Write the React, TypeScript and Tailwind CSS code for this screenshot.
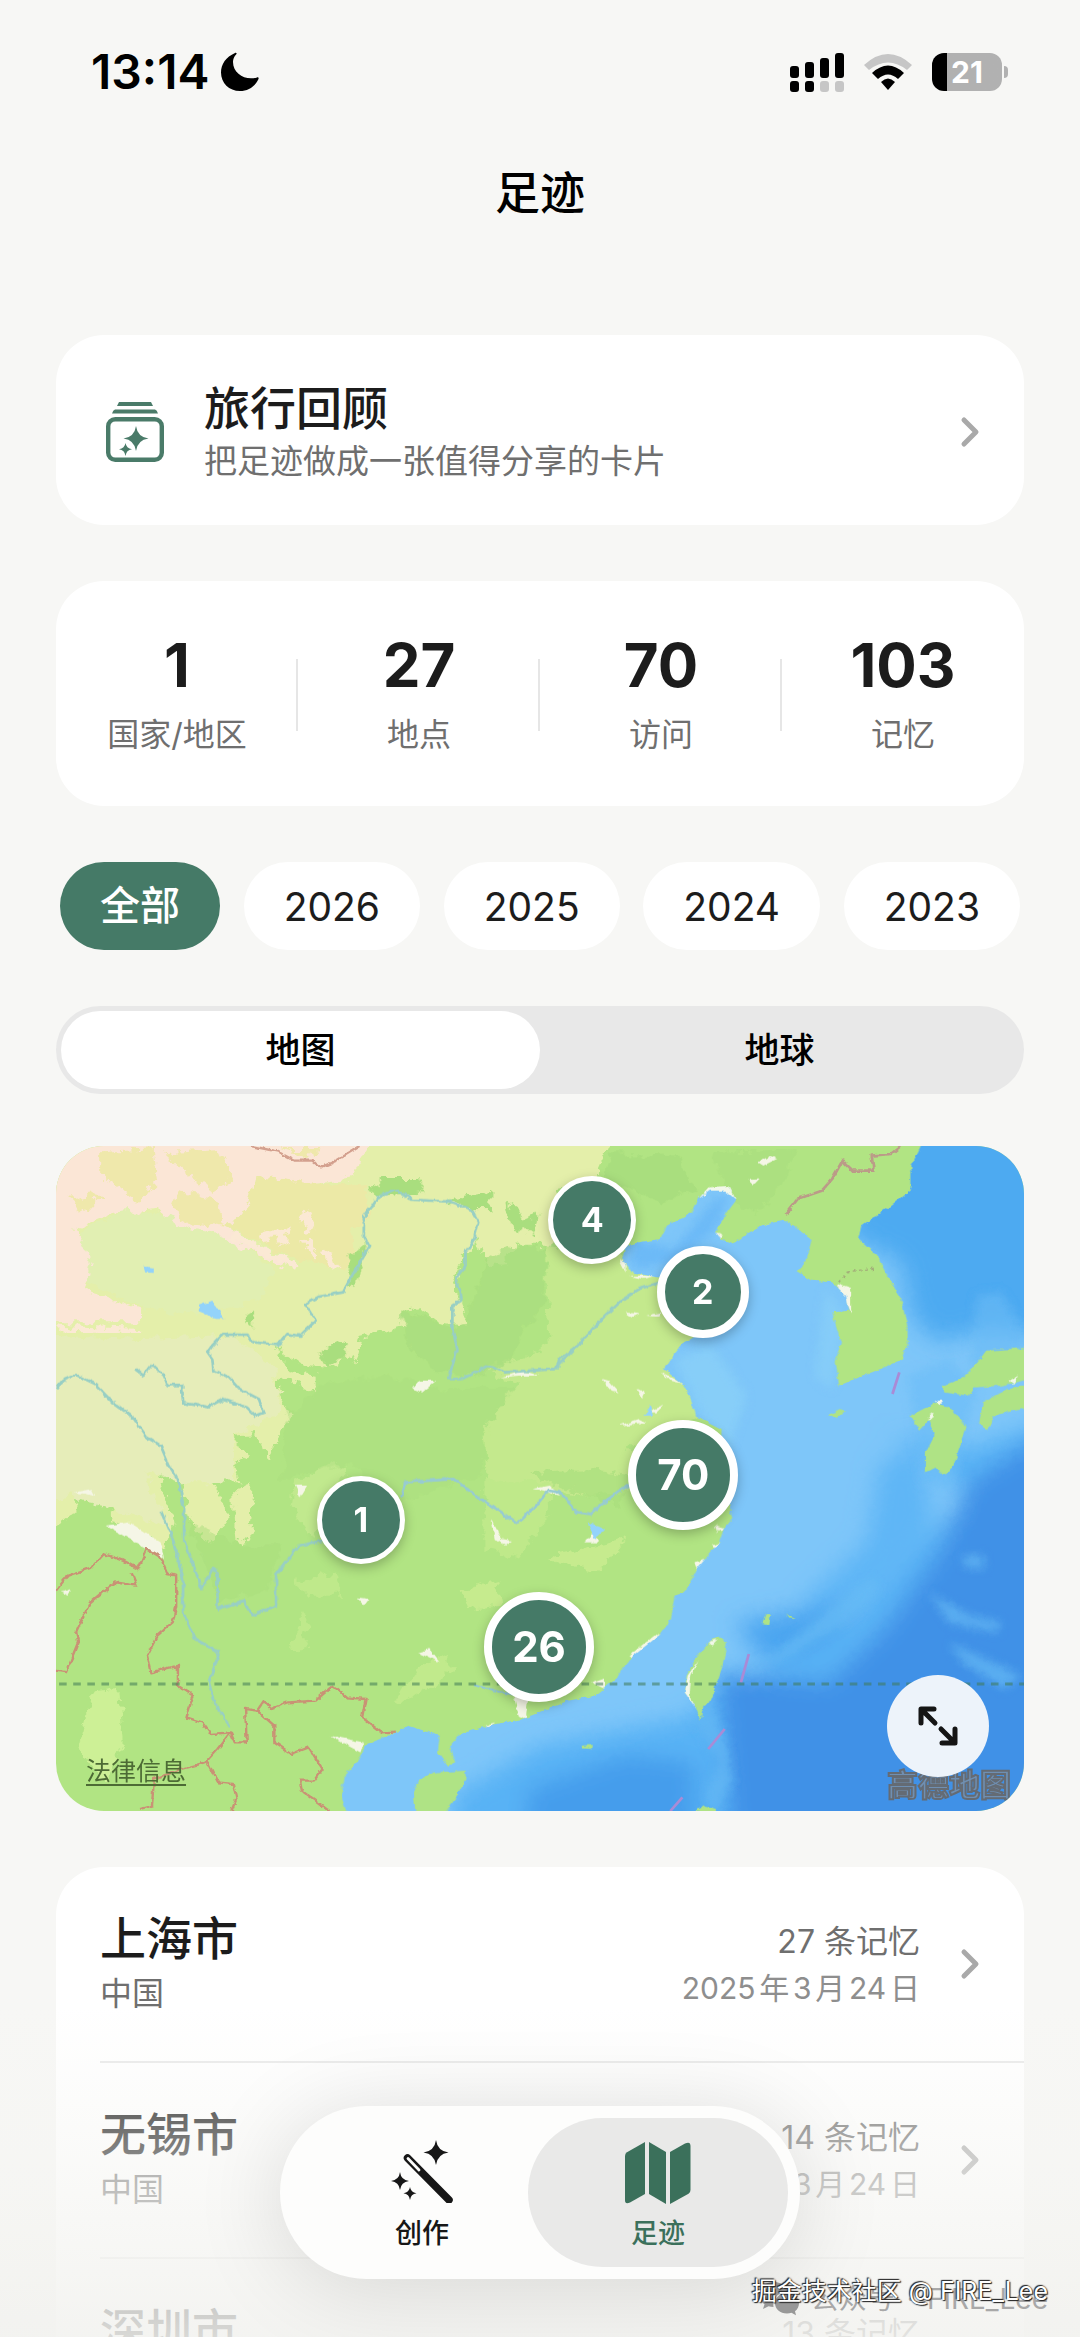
import {useState} from "react";

const years = ["全部", "2026", "2025", "2024", "2023"];

const stats = [
    {value: "1", label: "国家/地区"},
    {value: "27", label: "地点"},
    {value: "70", label: "访问"},
    {value: "103", label: "记忆"},
];

const places = [
    {city: "上海市", country: "中国", count: "27 条记忆", date: "2025年3月24日"},
    {city: "无锡市", country: "中国", count: "14 条记忆", date: "2025年3月24日"},
    {city: "深圳市", country: "中国", count: "13 条记忆", date: "2025年3月24日"},
];

const pins = [
    {count: 4, place: "left-[55.4%] top-[11.1%]", look: "size-22 border-5 text-[34px]"},
    {count: 2, place: "left-[66.8%] top-[22%]", look: "size-23 border-8 text-[34px]"},
    {count: 70, place: "left-[64.8%] top-[49.4%]", look: "size-[110px] border-8 text-[42px]"},
    {count: 1, place: "left-[31.5%] top-[56.2%]", look: "size-22 border-5 text-[34px]"},
    {count: 26, place: "left-[49.9%] top-[75.4%]", look: "size-[110px] border-8 text-[42px]"},
];

function ChevronIcon() {
    return <svg viewBox="0 0 20 32" className="h-8 w-5 shrink-0 text-[#a9a9a9]" fill="none" stroke="currentColor"
        strokeWidth="5" strokeLinecap="round" strokeLinejoin="round">
        <path d="M4 4 16 16 4 28" />
    </svg>
}

function StatusBar() {
    return <header className="flex h-36 items-center justify-between pr-[72px] pl-[91px]">
        <div className="flex items-center gap-3">
            <span className="text-[48px] leading-none font-semibold">13:14</span>
            <svg viewBox="0 0 38 40" className="h-10 w-[38px]">
                <path d="M14 1C5 5 0 12 0 20.500C0 31 8 39 19 39C27 39 34 34.500 37.500 27C38 25.700 37 25 36 25.400C25 29 12 22 12 10C12 7 13 4.500 15.300 2.200C16.200 1.200 15.200 .5 14 1Z" />
            </svg>
        </div>
        <div className="flex items-center gap-5">
            <svg viewBox="0 0 54 40" className="h-10 w-[54px]">
                <rect x="0" y="14" width="9" height="12" rx="3" />
                <rect x="15" y="10" width="9" height="16" rx="3" />
                <rect x="30" y="6" width="9" height="20" rx="3" />
                <rect x="45" y="1" width="9" height="25" rx="3" />
                <rect x="0" y="29" width="9" height="11" rx="3" />
                <rect x="15" y="29" width="9" height="11" rx="3" />
                <rect x="30" y="29" width="9" height="11" rx="3" fill="#c6c6c6" />
                <rect x="45" y="29" width="9" height="11" rx="3" fill="#c6c6c6" />
            </svg>
            <svg viewBox="0 0 48 36" className="h-9 w-12">
                <path d="M0 11Q24-11 48 11L43 16Q24 1 5 16Z" fill="#c6c6c6" />
                <path d="M8 19Q24 4 40 19L34 25Q24 16 14 25Z" />
                <path d="M17 28Q24 21 31 28L24 36Z" />
            </svg>
            <div className="flex items-center gap-0.5">
                <div className="flex h-[38px] w-[70px] items-center justify-center rounded-xl bg-linear-to-r from-black from-21% to-[#b1b1b1] to-21% text-[30px] leading-none font-bold text-white">
                    21
                </div>
                <div className="h-3 w-1 rounded-r-full bg-[#b1b1b1]" />
            </div>
        </div>
    </header>
}

function RecapCard() {
    return <button type="button"
        className="flex items-center rounded-[48px] bg-white pt-12 pr-11 pb-11 pl-[50px] text-left">
        <svg viewBox="0 0 58 60" className="mr-10 h-[60px] w-[58px] text-[#4a7b69]" fill="currentColor">
            <path d="M13 0H45L47 4H11Z" />
            <path d="M9 7.500H49Q51 8 52 11.500H6Q7 8 9 7.500Z" />
            <rect x="2.200" y="17.200" width="53.600" height="40.600" rx="7" fill="none" stroke="currentColor" strokeWidth="4.400" />
            <path d="M30 24Q31.500 35 42.500 36.500Q31.500 38 30 49Q28.500 38 17.500 36.500Q28.500 35 30 24Z" />
            <path d="M19.500 41Q20.300 46.500 26 47.300Q20.300 48 19.500 54Q18.700 48 13 47.300Q18.700 46.500 19.500 41Z" />
        </svg>
        <div className="grow">
            <h2 className="text-[46px] leading-[50px] font-medium text-[#1c1c1c]">旅行回顾</h2>
            <p className="mt-2 text-[33px] leading-10 text-[#6f6f6f]">把足迹做成一张值得分享的卡片</p>
        </div>
        <ChevronIcon />
    </button>
}

function StatsCard() {
    return <dl className="grid grid-cols-4 rounded-[48px] bg-white pt-[50px] pb-[47px] text-center">
        {stats.map((stat) => <div key={stat.label} className="group relative flex flex-col-reverse">
            <dt className="mt-3 text-[32px] leading-12 text-[#6f6f6f]">{stat.label}</dt>
            <dd className="text-[60px] leading-[68px] font-bold text-[#1c1c1c]">{stat.value}</dd>
            <span className="absolute top-1/2 right-0 h-18 w-0.5 -translate-y-1/2 bg-[#e6e6e6] group-last:hidden" />
        </div>)}
    </dl>
}

function Terrain() {
    return <svg viewBox="46 51 2811 1995" preserveAspectRatio="none" className="absolute inset-0 size-full"
        fill="none">
        <defs>
            <filter id="rough" x="0" y="0" width="100%" height="100%">
                <feTurbulence type="fractalNoise" baseFrequency=".05" numOctaves="3" seed="4" result="noise" />
                <feDisplacementMap in="SourceGraphic" in2="noise" scale="14" xChannelSelector="R" yChannelSelector="G" />
            </filter>
            <filter id="veryRough" x="0" y="0" width="100%" height="100%">
                <feTurbulence type="fractalNoise" baseFrequency=".03" numOctaves="4" seed="9" result="noise" />
                <feDisplacementMap in="SourceGraphic" in2="noise" scale="45" xChannelSelector="R" yChannelSelector="G" />
            </filter>
            <filter id="soft" x="-20%" y="-20%" width="140%" height="140%">
                <feGaussianBlur stdDeviation="34" />
            </filter>
            <filter id="softer" x="-20%" y="-20%" width="140%" height="140%">
                <feGaussianBlur stdDeviation="14" />
            </filter>
            <clipPath id="sea">
                <path d="M2567 30L2530 110V180L2470 230L2385 290L2375 330L2430 380L2460 440L2500 510L2518 590L2520 640L2505 690L2440 720L2390 740L2320 770L2310 700L2325 640L2310 590L2300 550L2350 545L2340 500L2300 460L2240 455L2200 430L2230 380L2240 330L2200 300L2160 275L2110 285L2060 310L2010 345L1975 330L1960 310L1995 250L2020 215L2000 175L1940 180L1910 210L1890 250L1820 290L1800 330L1740 340L1700 350L1690 390L1715 430L1790 445L1860 450L2000 480L1900 620L1870 640L1830 690L1812 720L1870 770L1890 810L1905 860L1980 900L1975 1000L2010 1170L1985 1200L1972 1240L1907 1320L1872 1390L1842 1400L1832 1470L1802 1515L1712 1590L1672 1650L1612 1700L1532 1715L1462 1745L1400 1770L1300 1790L1220 1815L1190 1850L1205 1900L1185 1910L1155 1870L1160 1820L1070 1790L1010 1820L945 1850L920 1900L885 1940L875 2000L895 2070H2880V30Z" />
            </clipPath>
        </defs>

        <rect x="0" y="0" width="2900" height="2100" fill="#b1e483" />

        {/* lowlands and grassland */}
        <g filter="url(#veryRough)">
            <path d="M1470 350L1700 380L1810 445L1920 620L1830 700L1930 860L1700 960L1870 1060L1600 1100L1300 1060L1290 900L1390 760L1290 720L1480 650L1470 450Z" fill="#c4e98d" />
            <path d="M1290 1050L1480 1060L1480 1150L1400 1280L1290 1260Z" fill="#bfe98a" />
            <path d="M1480 1280L1700 1230L1620 1330L1500 1300ZM1220 1380L1330 1350L1340 1430L1240 1440Z" fill="#c6eb8e" />
            <path d="M1030 1720L1090 1620L1180 1580L1200 1620L1130 1680Z" fill="#c1ea8c" />
            <path d="M730 1560L760 1440L780 1480L760 1570ZM740 1360L860 1330L880 1400L780 1400Z" fill="#bfe98b" />
            <path d="M150 1690L230 1680L240 1850L190 1960L110 1860Z" fill="#cdf096" />
            <path d="M740 1060L850 1000L900 1010L840 1130L790 1230L730 1130Z" fill="#c1e98e" />
            <path d="M20 20H1665L1620 120V160L1500 190L1490 350H1390L1340 410L1290 400L1270 330L1230 380L1200 450L1240 590L1160 580L1110 540L1050 545L1060 590L990 610L930 625L910 710L880 650L870 710L830 720L760 710L680 650L730 730L800 740V790L700 745L690 790L730 860L690 920L670 990L640 960L630 915L560 920L600 980L560 1010L580 1060L500 1060L550 1160L490 1250L430 1160L410 1060L340 1030L390 1180L360 1260L300 1220L200 1185L220 1130L130 1100L20 1150Z" fill="#e4efaa" />
            <path d="M20 620L300 630L560 620L680 720L700 850L560 920L560 1060H400L300 1020L380 1200L220 1140L20 1100Z" fill="#e6edb9" />
            <path d="M110 310L250 240L400 270L560 330L680 420L640 520L450 560L280 530L140 460Z" fill="#e1efb2" />
            <path d="M560 1080L620 1060L610 1230L570 1240Z" fill="#e4efaa" />
            <path d="M20 1150L90 1090L110 1140L30 1200Z" fill="#e4efaa" />
        </g>

        {/* deserts */}
        <g filter="url(#veryRough)">
            <path d="M20 20H980L900 150L720 170L620 140L600 250L540 290L620 340L720 400L700 410L500 310L400 290L340 240L220 250L100 300L150 400L130 480L290 540L290 580H20Z" fill="#fbe6d6" />
            <path d="M620 140L780 160L950 170L950 260L900 300L920 400L860 420L720 380L540 290L600 250Z" fill="#ece9a6" />
            <path d="M180 70L330 60L340 160L290 220L180 150ZM360 70L520 60L560 150L500 190L420 130ZM400 190L500 210L540 290L430 280L380 240ZM80 210L180 195L130 250ZM700 60L820 60L770 80Z" fill="#efe8ab" />
            <path d="M760 250L790 310M770 330L800 390M830 370L860 420M640 330L710 310L700 340M560 320L740 410M50 600L290 610" stroke="#fbe9d4" strokeWidth="20" />
        </g>

        {/* forest */}
        <g filter="url(#veryRough)" fill="#a9de7e">
            <path d="M955 180L1000 150L1100 150L1120 190L980 200ZM1180 210L1310 185L1310 240L1250 240Z" />
            <path d="M900 390L945 350L920 470L890 470ZM590 560L620 540L620 590ZM640 540L690 580ZM800 680L860 640L900 650L840 720Z" />
            <path d="M1040 540L1110 560L1200 600L1240 580L1290 400L1360 350L1470 360L1460 540L1400 600L1370 700L1250 740L1150 720L1070 660Z" opacity=".75" />
            <path d="M1350 210L1400 270L1450 250L1440 320L1360 280ZM1660 70L1850 80L1900 180L1800 220L1640 150Z" />
            <path d="M720 860L830 760L1000 740L1180 780L1380 780L1290 900L1290 1030L1050 1120L900 1000L700 1050Z" opacity=".35" />
            <path d="M430 1180L600 1250L700 1250L660 1380L520 1420Z" opacity=".5" />
            <path d="M1420 1030L1600 1020L1720 1040L1680 1130L1560 1090Z" opacity=".7" />
            <path d="M1950 70L2200 60L2160 160L2080 260L1990 200Z" opacity=".6" />
        </g>

        {/* bare ground and city footprints */}
        <g filter="url(#rough)" fill="#f5f6e6">
            <path d="M1080 780L1100 755L1150 755L1110 790ZM1340 745L1400 725L1450 740L1390 740ZM100 1090L150 1080L160 1100ZM190 1190L260 1180L350 1240L360 1290L310 1260ZM740 1070L775 1070L755 1105ZM920 1405L955 1410L940 1430ZM1095 1570L1130 1560L1160 1600ZM1310 1170L1340 1230L1370 1235L1350 1250L1320 1230ZM1430 1080L1480 1070L1510 1100ZM1375 1700L1420 1690L1410 1770L1390 1760ZM840 1820L940 1840L930 1870ZM905 1930L935 1890L925 1920Z" />
            <path d="M1632 750L1650 755L1680 790L1660 785ZM1735 780L1755 790L1745 810ZM1760 850L1810 830L1790 850ZM1680 890L1740 870L1760 880ZM1700 550L1740 555L1720 565ZM1760 560L1800 550L1800 565ZM1805 730L1870 765L1830 755ZM1680 390L1700 400L1700 430ZM1710 440L1790 440L1750 450ZM2085 100L2120 80L2140 90L2100 110ZM2060 150L2090 148L2070 170ZM2310 465L2355 480L2355 550L2335 510ZM1955 310L1985 320L1970 330Z" />
            <path d="M1580 1240L1610 1210L1620 1240ZM1900 1300L1940 1290L1910 1330ZM1950 1250L1972 1240L1970 1270ZM1960 1190L1990 1200L1965 1210ZM1710 1580L1790 1515L1810 1520L1730 1590ZM1600 1660L1640 1645L1640 1680ZM60 1390L90 1380L80 1400ZM1290 1790L1320 1780L1310 1800Z" />
        </g>

        {/* rivers and lakes */}
        <g filter="url(#rough)">
            <g stroke="#98cfc4" strokeWidth="8" strokeLinejoin="round">
                <path d="M275 720L300 740L325 705L360 740L370 768H412L415 822L490 835L530 812L600 835L625 860L650 850L635 810L580 780L550 745L503 725L500 690L487 670L500 650L530 617H605L620 640L690 648L715 615L755 620L800 575L770 525L810 503L880 490L900 450L920 415L955 350L940 320V265L980 205L1035 182L1080 212L1190 218L1250 240L1272 280L1260 330L1235 370V410L1205 450L1222 490V515L1197 530V600L1212 660L1185 750H1225L1300 710L1350 730L1495 720L1510 690L1570 640" />
                <path d="M1460 720H1495L1560 650L1640 560L1680 520L1740 480L1800 460" />
                <path d="M46 780L65 755L105 738L160 765L210 820L270 865L310 925L350 950L375 1010L400 1050L418 1140V1230L470 1380L500 1320L515 1330V1440L590 1415L615 1460L685 1430V1340L750 1250L820 1235" />
                <path d="M350 1145L385 1230L415 1350V1450L450 1530L520 1570L490 1660L505 1720L552 1795" />
                <path d="M1050 1105L1060 1060L1200 1050L1280 1110L1340 1150L1385 1185L1440 1130L1475 1085L1510 1090L1560 1150L1600 1155L1650 1110L1720 1060" stroke="#97cbd2" />
                <path d="M1260 1665L1340 1690L1400 1700" stroke="#8fc6de" strokeWidth="6" />
            </g>
            <path d="M460 530L500 515L535 570L510 570L465 550ZM300 412L330 415L330 432L305 430ZM1755 860L1770 830L1780 860ZM1590 1180L1620 1190L1640 1200L1610 1230Z" fill="#93d3fa" />
        </g>

        {/* sea, deeper towards the south-east */}
        <g filter="url(#rough)">
            <g clipPath="url(#sea)">
                <rect x="0" y="0" width="2900" height="2100" fill="#7ec6f9" />
                <g filter="url(#soft)">
                    <path d="M2500 -100H3000V640L2760 600L2600 640L2530 560L2500 400L2330 310Z" fill="#4daaf1" />
                    <path d="M2460 920L2620 1010L2700 1120L2540 1250L2350 1480L2080 1640L1980 1620L1900 1760L1452 1850L1200 2000V2200H3000V850L2700 960Z" fill="#58b2f5" />
                    <path d="M2440 1000L2560 960L2590 1180L2400 1400L2200 1480L2230 1400L2400 1240Z" fill="#5fb6f6" />
                    <path d="M3000 860V2200H2010L1970 1640L2060 1640L2290 1660L2450 1500L2610 1270L2700 1060Z" fill="#4091e7" />
                    <path d="M1420 1980L1700 1880L1900 1900V2200H1400Z" fill="#449dec" />
                    <path d="M2020 1480L2180 1450L2380 1420L2260 1560L2100 1600Z" fill="#4ba5f0" />
                </g>
                <g filter="url(#softer)">
                    <path d="M2060 1615L2180 1580L2340 1480L2440 1380L2410 1350L2280 1450L2140 1570ZM2580 1390L2700 1460L2790 1480L2780 1510L2640 1480ZM2640 1540L2850 1640L2800 1680L2680 1600ZM2680 1280L2740 1280L2740 1320L2680 1310Z" fill="#67bbf5" opacity=".7" />
                    <path d="M1900 1770L1950 1720L1990 1830L2010 1960L1960 2060L1930 2000L1970 1900Z" fill="#62b7f4" opacity=".8" />
                    <path d="M1720 330L1840 360L1960 210L2000 200L1960 300L1850 400L1720 420Z" fill="#68b6f6" opacity=".8" />
                    <path d="M1840 690L1950 650L2050 800L2000 960L1920 860Z" fill="#8ad0f7" opacity=".8" />
                    <path d="M2280 480L2340 560L2300 780L2250 740Z" fill="#8bd0f8" opacity=".6" />
                    <path d="M2720 500L2790 490L2850 600V700L2700 720Z" fill="#69baf5" opacity=".6" />
                    <path d="M2520 740L2640 690L2720 780L2640 1080L2560 1060Z" fill="#6bbcf7" opacity=".6" />
                </g>
            </g>

            {/* islands */}
            <g fill="#afe385">
                <path d="M1140 1930L1235 1925V1950L1205 2010L1170 2060H1090L1085 1990L1100 1955Z" />
                <path d="M1972 1520L1994 1540L1982 1610L1962 1670L1942 1720L1924 1740L1917 1775L1902 1730L1872 1690L1877 1640L1902 1590L1942 1540Z" />
                <path d="M2097 1485L2107 1455H2122L2117 1490ZM2164 1455L2192 1470L2172 1468ZM1572 1850L1602 1848L1600 1860L1575 1858ZM1902 2046L1932 2030L1962 2040V2060Z" />
                <path d="M2290 858L2322 840L2337 850L2312 867Z" />
                <path d="M2527 860L2602 820L2642 835L2687 890L2672 950L2652 1010L2627 1040L2602 1015L2572 1030V970L2597 920L2582 870L2552 905Z" />
                <path d="M2747 665L2880 655V750L2792 770L2712 775L2697 800L2622 790V770L2672 750L2722 700Z" />
                <path d="M2737 820L2792 790L2842 770H2880V835L2802 850L2772 860L2752 905L2727 880Z" />
            </g>
            <path d="M1872 1690L1880 1640L1912 1592L1890 1640L1886 1700L1905 1740ZM1942 1540L1968 1530L1950 1550ZM2598 815H2622L2610 830ZM2575 870L2595 850L2590 870ZM2815 755L2840 740L2825 765ZM2110 285L2135 275L2085 295ZM1912 210L1940 175L2000 170L2020 212L1990 185H1945Z" fill="#f3f8ea" />
        </g>

        {/* borders */}
        <g filter="url(#rough)" stroke="#c99274" strokeWidth="7" strokeLinejoin="round">
            <path d="M46 1385L80 1340L150 1315L185 1275L240 1295L285 1320L310 1260L350 1285L370 1335L395 1340V1430L385 1480L340 1520L310 1580L320 1630L400 1610V1670L445 1700L425 1765L470 1780L495 1815L552 1810L565 1840H600L595 1740L630 1745L650 1715L670 1740L720 1720L800 1715L850 1670L890 1705L945 1710L935 1765L990 1810L1030 1808" />
            <path d="M46 1625L75 1630L110 1540L105 1510L145 1420L180 1390L220 1360L280 1370L265 1330" />
            <path d="M630 1745L680 1790V1840L730 1875L780 1855L820 1920L795 1955L755 1955L760 1985L800 2015L840 2046" />
            <path d="M552 1810L515 1860L480 1900L410 1920L330 1950L325 2030L290 2040M485 1895L515 1960L560 1965L570 2010L555 2046" />
            <path d="M612 51L690 68L740 95H790L815 115L860 95L930 51" stroke="#d3a08e" />
            <path d="M2165 255L2200 210L2270 185L2300 150L2330 95L2360 125H2420L2415 80L2470 75L2500 50" stroke="#bb9b88" strokeWidth="8" />
            <path d="M2320 460L2345 430L2430 418" stroke="#a3b079" strokeDasharray="8 10" />
        </g>
        <path d="M2495 730L2475 795M2058 1575L2035 1660M1988 1800L1940 1860M1865 2005L1830 2046" stroke="#a98bd6" strokeWidth="8" />
        <path d="M55 1665H2858" stroke="#3f7a55" strokeOpacity=".55" strokeWidth="9" strokeDasharray="22 19" />
    </svg>
}

function TravelMap() {
    return <section aria-label="地图" className="relative h-[665px] overflow-hidden rounded-[48px]">
        <Terrain />
        {pins.map((pin) => <button key={pin.count} type="button"
            className={`absolute flex -translate-1/2 items-center justify-center rounded-full border-white bg-[#457a67] leading-none font-bold text-white shadow-[0_4px_12px_rgba(0,0,0,0.25)] ${pin.place} ${pin.look}`}>
            {pin.count}
        </button>)}
        <a href="#legal"
            className="absolute bottom-6 left-[30px] text-[25px] leading-8 text-[#4d6b35] underline decoration-2 underline-offset-4">法律信息</a>
        <span
            className="absolute right-[13px] bottom-2 text-[31px] leading-9 font-bold text-[#6f8fb2] [-webkit-text-stroke:2px_#646b74]">高德地图</span>
        <button type="button" aria-label="全屏"
            className="absolute right-[35px] bottom-[34px] flex size-[102px] items-center justify-center rounded-full bg-[#edf3fa]">
            <svg viewBox="0 0 40 40" className="size-10" fill="none" stroke="#151515" strokeWidth="5"
                strokeLinecap="round" strokeLinejoin="round">
                <path d="M3 17V3H16M4 4 17 17M37 23V37H24M36 36 23 23" />
            </svg>
        </button>
    </section>
}

function PlaceList() {
    return <ul className="rounded-t-[48px] bg-white pl-11">
        {places.map((place) => <li key={place.city} className="border-b-2 border-[#e9e9e9]">
            <a href={`#${place.city}`} className="flex h-[194px] items-center pr-11">
                <div className="grow">
                    <h3 className="text-[46px] leading-[60px] font-medium text-[#1c1c1c]">{place.city}</h3>
                    <p className="text-[32px] leading-[52px] text-[#6f6f6f]">{place.country}</p>
                </div>
                <div className="mr-10 text-right">
                    <p className="text-[32px] leading-12 text-[#6f6f6f]">{place.count}</p>
                    <p className="text-[30px] leading-11 text-[#8e8e8e] [text-autospace:normal]">{place.date}</p>
                </div>
                <ChevronIcon />
            </a>
        </li>)}
    </ul>
}

function TabBar() {
    return <nav
        className="absolute bottom-[58px] left-1/2 flex -translate-x-1/2 rounded-full bg-[#fdfdfc] p-3 shadow-[0_8px_90px_rgba(0,0,0,0.13)]">
        <button type="button" className="flex h-[149px] w-[260px] flex-col items-center pt-[22px] text-[#171717]">
            <svg viewBox="0 0 62 63" className="h-[63px] w-[62px]" fill="currentColor">
                <path d="M45 0Q46.500 11 57.500 12.500Q46.500 14 45 25Q43.500 14 32.500 12.500Q43.500 11 45 0Z" />
                <path d="M9 32Q10 40 18 41Q10 42 9 50Q8 42 0 41Q8 40 9 32Z" />
                <path d="M19 47Q19.800 52.500 25.500 53.300Q19.800 54 19 60Q18.200 54 12.500 53.300Q18.200 52.500 19 47Z" />
                <path d="M16.500 18 58 60" stroke="currentColor" strokeWidth="7.500" strokeLinecap="round" />
                <path d="M17 18.500 28 30" stroke="#fdfdfc" strokeWidth="2.800" strokeLinecap="round" />
            </svg>
            <span className="mt-[15px] text-[27px] leading-8 font-medium">创作</span>
        </button>
        <button type="button"
            className="-ml-6 flex h-[149px] w-[260px] flex-col items-center rounded-full bg-[#e9e9e8] pt-[24px] text-[#3b705b]">
            <svg viewBox="0 0 66 62" className="h-[62px] w-[66px]" fill="currentColor">
                <path d="M20 0V52L5 60.500Q0 63 0 58V14Q0 11.500 2 10.300Z" />
                <path d="M24 0 41 10V62L24 52Z" />
                <path d="M45 10 60 1.500Q65.500-1 65.500 4V48Q65.500 50.500 63.500 51.700L45 62Z" />
            </svg>
            <span className="mt-[14px] text-[27px] leading-8 font-medium">足迹</span>
        </button>
    </nav>
}

function Watermark() {
    return <div className="absolute right-8 bottom-5 grid justify-items-end">
        <div className="col-start-1 row-start-1 mt-2 flex items-center gap-3 text-[28px] leading-9 text-[#a8a8a8]">
            <svg viewBox="0 0 40 34" className="h-[34px] w-10" fill="#989898">
                <path d="M15 0C6 0 0 5.500 0 12.500C0 16.500 2 20 5.500 22.300L4 27L9.500 24.300C11 24.800 13 25 14.500 25C13 16 20 10 29 9.500C27.500 4 22 0 15 0Z" />
                <path d="M28 11C21 11 16 15.500 16 21.300C16 27 21 31.500 28 31.500C29.500 31.500 31 31.200 32.500 30.800L37 33.300L36 29.300C38.500 27.500 40 24.500 40 21.300C40 15.500 34.500 11 28 11Z" />
            </svg>
            <span>公众号</span>
            <span>·</span>
            <span>FIRE_Lee</span>
        </div>
        <span
            className="col-start-1 row-start-1 text-[25px] leading-9 text-white [text-shadow:-1px_-1px_1px_#222,1px_1px_1px_#222,0_0_2px_#444]">掘金技术社区 @ FIRE_Lee</span>
    </div>
}

export default function App() {
    const [year, setYear] = useState("全部")
    const [mode, setMode] = useState("地图")

    return <div
        className="relative h-screen overflow-hidden bg-[#f7f7f5] font-['Inter','Noto_Sans_CJK_SC',sans-serif] text-black">
        <StatusBar />
        <h1 className="h-25 text-center text-[45px] leading-25 font-medium">足迹</h1>
        <main className="flex flex-col gap-14 px-14 pt-[91px]">
            <RecapCard />
            <StatsCard />
            <div className="flex justify-between px-1">
                {years.map((item) => <button key={item} type="button" onClick={() => setYear(item)}
                    className={item === year
                        ? "h-22 rounded-full bg-[#457a67] px-10 text-[40px] leading-none font-medium text-white"
                        : "h-22 rounded-full bg-white px-10 text-[39px] leading-none text-[#1c1c1c]"}>
                    {item}
                </button>)}
            </div>
            <div className="flex flex-col gap-13">
                <div className="grid h-22 grid-cols-2 rounded-full bg-[#e8e8e8] p-[5px]">
                    {["地图", "地球"].map((item) => <button key={item} type="button" onClick={() => setMode(item)}
                        className={item === mode
                            ? "rounded-full bg-white text-[35px] leading-none font-medium"
                            : "rounded-full text-[35px] leading-none font-medium"}>
                        {item}
                    </button>)}
                </div>
                <TravelMap />
            </div>
            <PlaceList />
        </main>
        <div
            className="pointer-events-none absolute inset-x-0 bottom-0 h-[330px] bg-linear-to-b from-[#f5f5f2]/0 via-[#f5f5f2]/60 via-56% to-[#f2f2ef]/88" />
        <TabBar />
        <Watermark />
    </div>
}
